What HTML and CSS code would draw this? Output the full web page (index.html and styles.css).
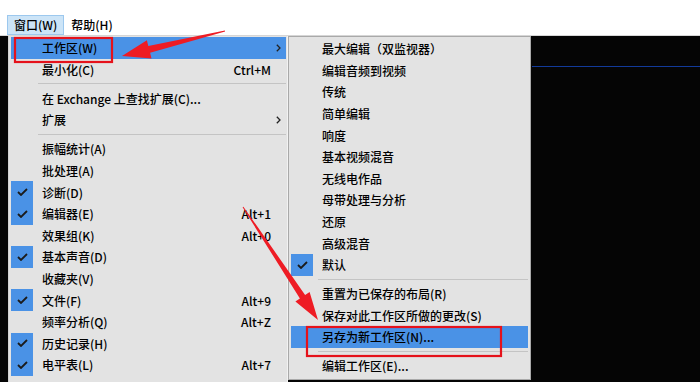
FILE: index.html
```html
<!DOCTYPE html>
<html lang="zh-CN">
<head>
<meta charset="utf-8">
<title>窗口菜单</title>
<link rel="stylesheet" href="styles.css">
</head>
<body>
<div class="screen">
  <div class="menubar">
    <span class="mb-item active">窗口(W)</span>
    <span class="mb-item">帮助(H)</span>
  </div>
  <div class="workspace"><div class="track-line"></div></div>

  <div class="menu main-menu">
    <div class="item hl"><span class="chk"></span><span class="label">工作区(W)</span><span class="arr"><svg width="5" height="8" viewBox="0 0 5 8"><path d="M0.8 0.8 L4 4 L0.8 7.2" fill="none" stroke="#222" stroke-width="1.3"/></svg></span></div>
    <div class="item"><span class="chk"></span><span class="label">最小化(C)</span><span class="key">Ctrl+M</span><span class="arr"></span></div>
    <div class="sep"></div>
    <div class="item"><span class="chk"></span><span class="label">在 Exchange 上查找扩展(C)...</span><span class="arr"></span></div>
    <div class="item"><span class="chk"></span><span class="label">扩展</span><span class="arr"><svg width="5" height="8" viewBox="0 0 5 8"><path d="M0.8 0.8 L4 4 L0.8 7.2" fill="none" stroke="#222" stroke-width="1.3"/></svg></span></div>
    <div class="sep"></div>
    <div class="item"><span class="chk"></span><span class="label">振幅统计(A)</span><span class="arr"></span></div>
    <div class="item"><span class="chk"></span><span class="label">批处理(A)</span><span class="arr"></span></div>
    <div class="item"><span class="chk on"><svg width="11" height="8" viewBox="0 0 11 8"><path d="M1 4 L4 7 L10 1" fill="none" stroke="#1b1b1b" stroke-width="1.8"/></svg></span><span class="label">诊断(D)</span><span class="arr"></span></div>
    <div class="item"><span class="chk on"><svg width="11" height="8" viewBox="0 0 11 8"><path d="M1 4 L4 7 L10 1" fill="none" stroke="#1b1b1b" stroke-width="1.8"/></svg></span><span class="label">编辑器(E)</span><span class="key">Alt+1</span><span class="arr"></span></div>
    <div class="item"><span class="chk"></span><span class="label">效果组(K)</span><span class="key">Alt+0</span><span class="arr"></span></div>
    <div class="item"><span class="chk on"><svg width="11" height="8" viewBox="0 0 11 8"><path d="M1 4 L4 7 L10 1" fill="none" stroke="#1b1b1b" stroke-width="1.8"/></svg></span><span class="label">基本声音(D)</span><span class="arr"></span></div>
    <div class="item"><span class="chk"></span><span class="label">收藏夹(V)</span><span class="arr"></span></div>
    <div class="item"><span class="chk on"><svg width="11" height="8" viewBox="0 0 11 8"><path d="M1 4 L4 7 L10 1" fill="none" stroke="#1b1b1b" stroke-width="1.8"/></svg></span><span class="label">文件(F)</span><span class="key">Alt+9</span><span class="arr"></span></div>
    <div class="item"><span class="chk"></span><span class="label">频率分析(Q)</span><span class="key">Alt+Z</span><span class="arr"></span></div>
    <div class="item"><span class="chk on"><svg width="11" height="8" viewBox="0 0 11 8"><path d="M1 4 L4 7 L10 1" fill="none" stroke="#1b1b1b" stroke-width="1.8"/></svg></span><span class="label">历史记录(H)</span><span class="arr"></span></div>
    <div class="item"><span class="chk on"><svg width="11" height="8" viewBox="0 0 11 8"><path d="M1 4 L4 7 L10 1" fill="none" stroke="#1b1b1b" stroke-width="1.8"/></svg></span><span class="label">电平表(L)</span><span class="key">Alt+7</span><span class="arr"></span></div>
  </div>

  <div class="menu sub-menu">
    <div class="item"><span class="chk"></span><span class="label">最大编辑（双监视器）</span></div>
    <div class="item"><span class="chk"></span><span class="label">编辑音频到视频</span></div>
    <div class="item"><span class="chk"></span><span class="label">传统</span></div>
    <div class="item"><span class="chk"></span><span class="label">简单编辑</span></div>
    <div class="item"><span class="chk"></span><span class="label">响度</span></div>
    <div class="item"><span class="chk"></span><span class="label">基本视频混音</span></div>
    <div class="item"><span class="chk"></span><span class="label">无线电作品</span></div>
    <div class="item"><span class="chk"></span><span class="label">母带处理与分析</span></div>
    <div class="item"><span class="chk"></span><span class="label">还原</span></div>
    <div class="item"><span class="chk"></span><span class="label">高级混音</span></div>
    <div class="item"><span class="chk on"><svg width="11" height="8" viewBox="0 0 11 8"><path d="M1 4 L4 7 L10 1" fill="none" stroke="#1b1b1b" stroke-width="1.8"/></svg></span><span class="label">默认</span></div>
    <div class="sep"></div>
    <div class="item"><span class="chk"></span><span class="label">重置为已保存的布局(R)</span></div>
    <div class="item"><span class="chk"></span><span class="label">保存对此工作区所做的更改(S)</span></div>
    <div class="item hl"><span class="chk"></span><span class="label">另存为新工作区(N)...</span></div>
    <div class="sep"></div>
    <div class="item"><span class="chk"></span><span class="label">编辑工作区(E)...</span></div>
  </div>

  <svg class="annot" width="700" height="382" viewBox="0 0 700 382">
    <rect x="15" y="38" width="97" height="24" fill="none" stroke="#e5121b" stroke-width="2.2"/>
    <rect x="307" y="327" width="194" height="29" fill="none" stroke="#e5121b" stroke-width="2.2"/>
    <polygon fill="#ee1c24" points="122,56 151.5,58.6 150.1,52.8 225.1,31.6 224.9,30.4 148.3,46.0 146.9,40.2"/>
    <polygon fill="#ee1c24" points="318,320 295.4,301.4 299.9,298.4 242.6,207.3 243.4,206.7 305.1,294.9 309.6,292.0"/>
  </svg>
</div>
</body>
</html>
```

FILE: styles.css
```css
* { box-sizing: border-box; }
html, body {
  margin: 0;
  padding: 0;
  width: 700px;
  height: 382px;
  overflow: hidden;
  background: #050505;
}
body {
  font-family: "Noto Sans CJK SC", "Microsoft YaHei", sans-serif;
  font-size: 12px;
  font-weight: 500;
  color: #000;
}
.screen {
  position: relative;
  width: 700px;
  height: 382px;
  overflow: hidden;
  display: flex;
  flex-direction: column;
}
.menubar {
  height: 36px;
  background: #fff;
  border-bottom: 1px solid #d6d6d6;
  display: flex;
  align-items: flex-end;
  padding-left: 7px;
  padding-bottom: 0;
}
.mb-item {
  height: 20px;
  line-height: 18px;
  padding: 0 6px;
  border: 1px solid transparent;
  white-space: nowrap;
}
.mb-item.active {
  background: #cce4f7;
  border-color: #9cc8ee;
}
.workspace {
  flex: 1;
  background: #050505;
  padding-top: 30px;
  padding-left: 532px;
}
.track-line {
  height: 1px;
  background: #123a9a;
}

.menu {
  position: absolute;
  top: 36px;
  background: #e3e3e3;
  padding: 1px 1px;
}
.main-menu {
  left: 8px;
  width: 280px;
  height: 360px;
  border-left: 1px solid #d2d2d2;
  border-right: 1px solid #f2f2f2;
  padding-top: 1px;
}
.sub-menu {
  left: 288px;
  width: 243px;
  height: 344px;
  border: 1px solid #a9a9a9;
  padding: 1px 2px 1px 1px;
}
.item {
  height: 21.6px;
  display: flex;
  align-items: center;
  white-space: nowrap;
  margin-left: 1px;
}
.item.hl { background: #4a92e6; }
.chk {
  width: 22px;
  height: 100%;
  flex: none;
  display: flex;
  align-items: center;
  justify-content: center;
}
.chk.on { background: #4a92e6; }
.label {
  margin-left: 9px;
  flex: 1;
}
.key {
  margin-left: auto;
  flex: none;
}
.arr {
  width: 15px;
  flex: none;
  display: flex;
  align-items: center;
  padding-left: 5px;
}
.sep {
  height: 7.4px;
  display: flex;
  align-items: center;
  padding-left: 28px;
}
.sep::before {
  content: "";
  display: block;
  flex: 1;
  height: 1px;
  background: #c4c4c4;
}
.annot {
  position: absolute;
  left: 0;
  top: 0;
  pointer-events: none;
}
```
